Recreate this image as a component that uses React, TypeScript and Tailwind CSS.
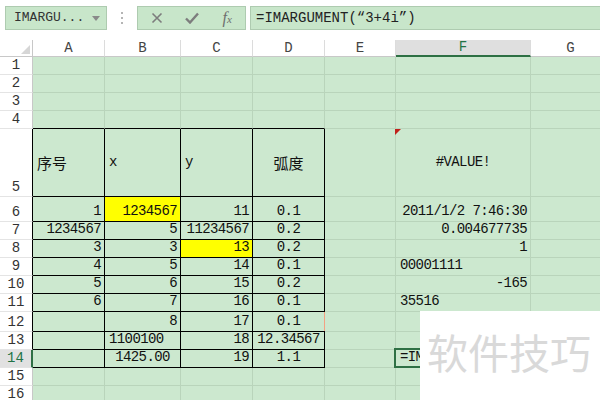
import React from "react";

type Cell = { t?: string; a?: "l" | "r" | "c"; y?: boolean; cjk?: boolean };

const COLS = ["A", "B", "C", "D", "E", "F", "G"];
const COL_W = ["w-[72px]", "w-[76px]", "w-[72px]", "w-[72px]", "w-[71px]", "w-[135px]", "w-[80px]"];

// row heights, rows 1..16
const ROW_H: Record<number, string> = {
  5: "h-[68px]",
  6: "h-[25px]",
  12: "h-[20px]",
};

const r = (t: string): Cell => ({ t, a: "r" });
const c = (t: string): Cell => ({ t, a: "c" });
const l = (t: string): Cell => ({ t, a: "l" });
const E: Cell = {};

const DATA: Record<number, Cell[]> = {
  5: [{ t: "序号", a: "l", cjk: true }, l("x"), l("y"), { t: "弧度", a: "c", cjk: true }, E, c("#VALUE!"), E],
  6: [r("1"), { t: "1234567", a: "r", y: true }, r("11"), c("0.1"), E, r("2011/1/2 7:46:30"), E],
  7: [r("1234567"), r("5"), r("11234567"), c("0.2"), E, r("0.004677735"), E],
  8: [r("3"), r("3"), { t: "13", a: "r", y: true }, c("0.2"), E, r("1"), E],
  9: [r("4"), r("5"), r("14"), c("0.1"), E, l("00001111"), E],
  10: [r("5"), r("6"), r("15"), c("0.2"), E, r("-165"), E],
  11: [r("6"), r("7"), r("16"), c("0.1"), E, l("35516"), E],
  12: [E, r("8"), r("17"), c("0.1"), E, E, E],
  13: [E, l("1100100"), r("18"), c("12.34567"), E, E, E],
  14: [E, c("1425.00"), r("19"), c("1.1"), E, l("=IMARGUMENT(“3+4i”)"), E],
};

function Toolbar() {
  return (
    <div className="h-[40px] flex items-start pt-[6px] pl-[5px] bg-white">
      <div className="w-[102px] h-[24px] shrink-0 border border-[#aecbb0] bg-[#c8e6ca] flex items-center justify-between pl-[8px] pr-[6px]">
        <span className="text-[13px] text-[#333]">IMARGU...</span>
        <span className="w-0 h-0 border-l-[4px] border-r-[4px] border-t-[5px] border-l-transparent border-r-transparent border-t-[#8a8a8a]" />
      </div>
      <div className="w-[30px] h-[24px] shrink-0 flex flex-col items-center justify-center gap-[3px]">
        <span className="w-[2px] h-[2px] bg-[#b5b5b5]" />
        <span className="w-[2px] h-[2px] bg-[#b5b5b5]" />
        <span className="w-[2px] h-[2px] bg-[#b5b5b5]" />
      </div>
      <div className="w-[109px] h-[24px] shrink-0 border border-[#aecbb0] bg-[#c8e6ca] flex">
        <div className="w-[36px] flex items-center justify-center pl-[3px]">
          <svg width="12" height="12" viewBox="0 0 12 12">
            <path d="M1.5 1.5 L10.5 10.5 M10.5 1.5 L1.5 10.5" stroke="#7d7d7d" strokeWidth="1.6" />
          </svg>
        </div>
        <div className="w-[36px] flex items-center justify-center">
          <svg width="14" height="12" viewBox="0 0 14 12">
            <path d="M1 6.5 L5 10.5 L13 1.5" stroke="#7d7d7d" strokeWidth="2.4" fill="none" />
          </svg>
        </div>
        <div className="w-[36px] flex items-center justify-center">
          <span className="italic text-[#6e6e6e] text-[16px] font-['Liberation_Serif',serif]">
            f<span className="text-[11px]">x</span>
          </span>
        </div>
      </div>
      <div className="w-[400px] h-[24px] shrink-0 ml-[4px] border border-[#aecbb0] bg-[#c8e6ca] flex items-center pl-[5px]">
        <span className="text-[14px] text-[#222] whitespace-nowrap">=IMARGUMENT(“3+4i”)</span>
      </div>
    </div>
  );
}

function HeaderRow() {
  return (
    <div className="flex h-[17px]">
      <div className="w-[33px] shrink-0 bg-white border-r border-b border-[#c8c8c8] flex items-end justify-end pr-[2px] pb-[2px]">
        <svg width="9" height="9" viewBox="0 0 9 9">
          <path d="M9 0 L9 9 L0 9 Z" fill="#d6d6d6" />
        </svg>
      </div>
      {COLS.map((col, i) => {
        const sel = col === "F";
        return (
          <div
            key={col}
            className={`${COL_W[i]} shrink-0 flex items-center justify-center text-[14px] border-r border-r-[#dcdcdc] ${
              sel ? "bg-[#dfdfdf] text-[#217346] border-b-2 border-b-[#2e7044]" : "bg-white text-[#444] border-b border-b-[#c8c8c8]"
            }`}
          >
            {col}
          </div>
        );
      })}
    </div>
  );
}

function Row({ n }: { n: number }) {
  const h = ROW_H[n] ?? "h-[18px]";
  const cells = DATA[n] ?? COLS.map(() => E);
  const inTableRow = n >= 5 && n <= 14;
  const sel = n === 14;
  return (
    <div className={`flex ${h}`}>
      <div
        className={`w-[33px] shrink-0 flex items-end justify-center leading-[17px] text-[14px] border-b border-b-[#e4e4e4] ${
          sel ? "bg-[#e1e1e1] text-[#217346] border-r-2 border-r-[#2e7044]" : "bg-white text-[#333] border-r"
        } ${!sel && inTableRow ? "border-r-black" : ""} ${!sel && !inTableRow ? "border-r-[#c8c8c8]" : ""}`}
      >
        {n}
      </div>
      {cells.map((cell, i) => {
        const tbl = inTableRow && i <= 3;
        const bottomBlack = i <= 3 && n >= 4 && n <= 14;
        const align = cell.a === "r" ? "justify-end pr-[3px]" : cell.a === "c" ? "justify-center" : "justify-start pl-[4px]";
        return (
          <div
            key={i}
            className={`${COL_W[i]} shrink-0 relative flex ${n === 5 ? "items-center" : "items-end pb-[1px]"} ${align} border-r border-b ${
              tbl ? "border-r-black" : "border-r-[#b9d4bb]"
            } ${bottomBlack ? "border-b-black" : "border-b-[#b9d4bb]"} ${cell.y ? "bg-[#ffff00]" : "bg-[#cce8cf]"}`}
          >
            {cell.t && (
              <span
                className={`whitespace-nowrap leading-[17px] text-[#111] ${
                  cell.cjk ? "text-[15px] font-['Noto_Sans_CJK_SC',sans-serif]" : "text-[14px] tracking-[-0.6px]"
                }`}
              >
                {cell.t}
              </span>
            )}
            {n === 5 && i === 5 && (
              <span className="absolute -left-px top-0 w-0 h-0 border-t-[6px] border-r-[6px] border-t-[#c0211b] border-r-transparent" />
            )}
            {n === 12 && i === 3 && <span className="absolute -right-[2px] top-0 bottom-0 w-[2px] bg-[#f3a183]" />}
            {n === 14 && i === 5 && (
              <span className="absolute -left-[2px] -top-[2px] -right-px -bottom-px border-2 border-[#2e7044]" />
            )}
          </div>
        );
      })}
    </div>
  );
}

export default function App() {
  return (
    <div className="relative w-[600px] h-[400px] overflow-hidden bg-white font-['Liberation_Mono','Noto_Sans_CJK_SC',monospace]">
      <Toolbar />
      <HeaderRow />
      {Array.from({ length: 16 }, (_, i) => (
        <Row key={i} n={i + 1} />
      ))}
      {/* watermark */}
      <div className="absolute left-[420px] top-[311px] w-[180px] h-[89px] bg-white pl-[7px] pt-[17px]">
        <span className="block whitespace-nowrap leading-[46px] text-[41px] text-[#d9d9d9] font-['Noto_Sans_CJK_SC',sans-serif]">
          软件技巧
        </span>
      </div>
    </div>
  );
}
